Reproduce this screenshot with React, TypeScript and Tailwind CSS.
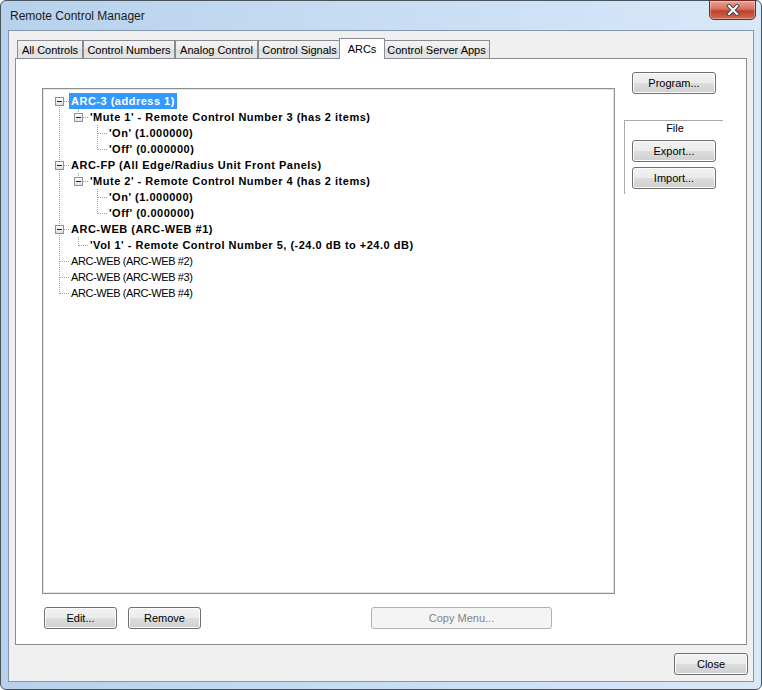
import React from 'react';

type TreeNode = { label: string; bold?: boolean; selected?: boolean; children?: TreeNode[] };

const arcs: TreeNode[] = [
  {
    label: 'ARC-3 (address 1)',
    bold: true,
    selected: true,
    children: [
      {
        label: "'Mute 1' - Remote Control Number 3 (has 2 items)",
        bold: true,
        children: [
          { label: "'On' (1.000000)", bold: true },
          { label: "'Off' (0.000000)", bold: true },
        ],
      },
    ],
  },
  {
    label: 'ARC-FP (All Edge/Radius Unit Front Panels)',
    bold: true,
    children: [
      {
        label: "'Mute 2' - Remote Control Number 4 (has 2 items)",
        bold: true,
        children: [
          { label: "'On' (1.000000)", bold: true },
          { label: "'Off' (0.000000)", bold: true },
        ],
      },
    ],
  },
  {
    label: 'ARC-WEB (ARC-WEB #1)',
    bold: true,
    children: [{ label: "'Vol 1' - Remote Control Number 5, (-24.0 dB to +24.0 dB)", bold: true }],
  },
  { label: 'ARC-WEB (ARC-WEB #2)' },
  { label: 'ARC-WEB (ARC-WEB #3)' },
  { label: 'ARC-WEB (ARC-WEB #4)' },
];

type Row = { node: TreeNode; guides: boolean[]; last: boolean; first: boolean };

function flatten(nodes: TreeNode[], guides: boolean[], out: Row[]) {
  nodes.forEach((node, i) => {
    const last = i === nodes.length - 1;
    out.push({ node, guides, last, first: guides.length === 0 && i === 0 });
    if (node.children) flatten(node.children, [...guides, !last], out);
  });
  return out;
}

const tabs = [
  { label: 'All Controls', w: 'w-[66px]' },
  { label: 'Control Numbers', w: 'w-[92px]' },
  { label: 'Analog Control', w: 'w-[83px]' },
  { label: 'Control Signals', w: 'w-[83px]' },
  { label: 'ARCs', w: 'w-[46px]', active: true },
  { label: 'Control Server Apps', w: 'w-[107px]' },
];

const LINE = '#a0a0a0';

// one 19px indent column of the tree: dotted guide lines and the +/- box
function Guide({ full }: { full: boolean }) {
  return (
    <svg width="19" height="16" className="shrink-0">
      {full && <line x1="9.5" y1="0" x2="9.5" y2="16" stroke={LINE} strokeDasharray="1 1" />}
    </svg>
  );
}

function Branch({ first, last, expander }: { first: boolean; last: boolean; expander: boolean }) {
  return (
    <svg width="19" height="16" className="shrink-0">
      <line x1="9.5" y1={first ? 8 : 0} x2="9.5" y2={last ? 9 : 16} stroke={LINE} strokeDasharray="1 1" />
      <line x1={expander ? 14 : 10} y1="8.5" x2="19" y2="8.5" stroke={LINE} strokeDasharray="1 1" />
      {expander && (
        <g>
          <defs>
            <linearGradient id="box" x1="0" y1="0" x2="0" y2="1">
              <stop offset="0" stopColor="#ffffff" />
              <stop offset="1" stopColor="#dedede" />
            </linearGradient>
          </defs>
          <rect x="5.5" y="4.5" width="8" height="8" fill="url(#box)" stroke="#919191" />
          <line x1="7" y1="8.5" x2="12" y2="8.5" stroke="#1e1e1e" />
        </g>
      )}
    </svg>
  );
}

function Btn({ label, w, disabled }: { label: string; w: string; disabled?: boolean }) {
  return (
    <div
      className={`${w} h-[22px] shrink-0 flex items-center justify-center rounded-[3px] border text-[11px] ${
        disabled
          ? 'border-[#adb2b5] bg-[#f4f4f4] text-[#838383]'
          : 'border-[#707070] bg-[linear-gradient(#f2f2f2,#ebebeb_50%,#dddddd_50%,#cfcfcf)] shadow-[inset_0_0_0_1px_#fcfcfc] text-black'
      }`}
    >
      {label}
    </div>
  );
}

export default function App() {
  const rows = flatten(arcs, [], []);

  return (
    <div className="w-[762px] h-[690px] flex flex-col rounded-[6px] border border-[#49545f] bg-[linear-gradient(90deg,#b7d1ec,#c9def4_55%,#d8e8f8)] px-[7px] pb-[7px] font-['Liberation_Sans',Arial,sans-serif] text-black select-none">
      {/* title bar */}
      <div className="h-[29px] shrink-0 flex items-start -mx-[7px] pl-[9px] pr-[5px]">
        <span className="mt-[8px] text-[12px] leading-[15px] text-[#1a1a1a]">Remote Control Manager</span>
        <div className="ml-auto w-[47px] h-[20px] -mt-px flex items-center justify-center rounded-b-[5px] border border-[#6e2a22] bg-[linear-gradient(#e8a494,#d7705e_45%,#c2412c_55%,#cf6a4e)] shadow-[inset_0_0_0_1px_rgba(255,255,255,0.35)]">
          <svg width="14" height="12" viewBox="0 0 14 12">
            <path d="M3 2 L11 10 M11 2 L3 10" stroke="#3a3f48" strokeWidth="4" strokeLinecap="square" />
            <path d="M3 2 L11 10 M11 2 L3 10" stroke="#ffffff" strokeWidth="2.2" strokeLinecap="square" />
          </svg>
        </div>
      </div>

      {/* client area */}
      <div className="h-[652px] flex flex-col border border-[#8496ab] bg-[#f0f0f0] text-[11px]">
        <div className="mt-[7px] ml-[6px] h-[20px] flex items-end pl-[2px]">
          {tabs.map((t) =>
            t.active ? (
              <div
                key={t.label}
                className={`${t.w} h-[21px] -mx-[2px] -mb-px relative z-10 flex items-start justify-center pt-[2px] border border-b-0 border-[#898c95] bg-white`}
              >
                {t.label}
              </div>
            ) : (
              <div
                key={t.label}
                className={`${t.w} h-[18px] flex items-center justify-center pt-px border border-b-0 border-[#898c95] bg-[linear-gradient(#f3f3f3,#ebebeb_50%,#dedede_50%,#e5e5e5)]`}
              >
                {t.label}
              </div>
            )
          )}
        </div>

        <div className="ml-[6px] w-[732px] h-[587px] flex flex-col border border-[#898c95] bg-white">
          <div className="flex">
            <div className="ml-[26px] mt-[29px] w-[573px] h-[506px] border border-[#8e8f8f] shadow-[inset_0_0_0_1px_#e3e3e3] bg-white pt-[4px] pl-[7px]">
              {rows.map((r, i) => (
                <div key={i} className="h-[16px] flex items-center">
                  {r.guides.map((g, j) => (
                    <Guide key={j} full={g} />
                  ))}
                  <Branch first={r.first} last={r.last} expander={!!r.node.children} />
                  <span
                    className={`h-[16px] leading-[16px] px-[2px] whitespace-nowrap ${
                      r.node.bold ? 'font-bold tracking-[0.5px]' : 'tracking-[-0.4px]'
                    } ${r.node.selected ? 'bg-[#3399ff] text-white' : ''}`}
                  >
                    {r.node.label}
                  </span>
                </div>
              ))}
            </div>

            <div className="ml-[9px] pt-[13px] flex flex-col">
              <div className="ml-[8px]">
                <Btn label="Program..." w="w-[84px]" />
              </div>
              <div className="mt-[26px] w-[99px] h-[74px] border-t border-l border-[#a9a9a9] flex flex-col">
                <div className="h-[15px] leading-[15px] text-center pl-[2px]">File</div>
                <div className="ml-[7px] mt-[4px] flex flex-col gap-[5px]">
                  <Btn label="Export..." w="w-[84px]" />
                  <Btn label="Import..." w="w-[84px]" />
                </div>
              </div>
            </div>
          </div>

          <div className="mt-[13px] ml-[28px] flex">
            <Btn label="Edit..." w="w-[73px]" />
            <div className="ml-[11px]">
              <Btn label="Remove" w="w-[73px]" />
            </div>
            <div className="ml-[170px]">
              <Btn label="Copy Menu..." w="w-[181px]" disabled />
            </div>
          </div>
        </div>

        <div className="mt-[8px] ml-[6px] w-[733px] flex justify-end">
          <Btn label="Close" w="w-[74px]" />
        </div>
      </div>
    </div>
  );
}
